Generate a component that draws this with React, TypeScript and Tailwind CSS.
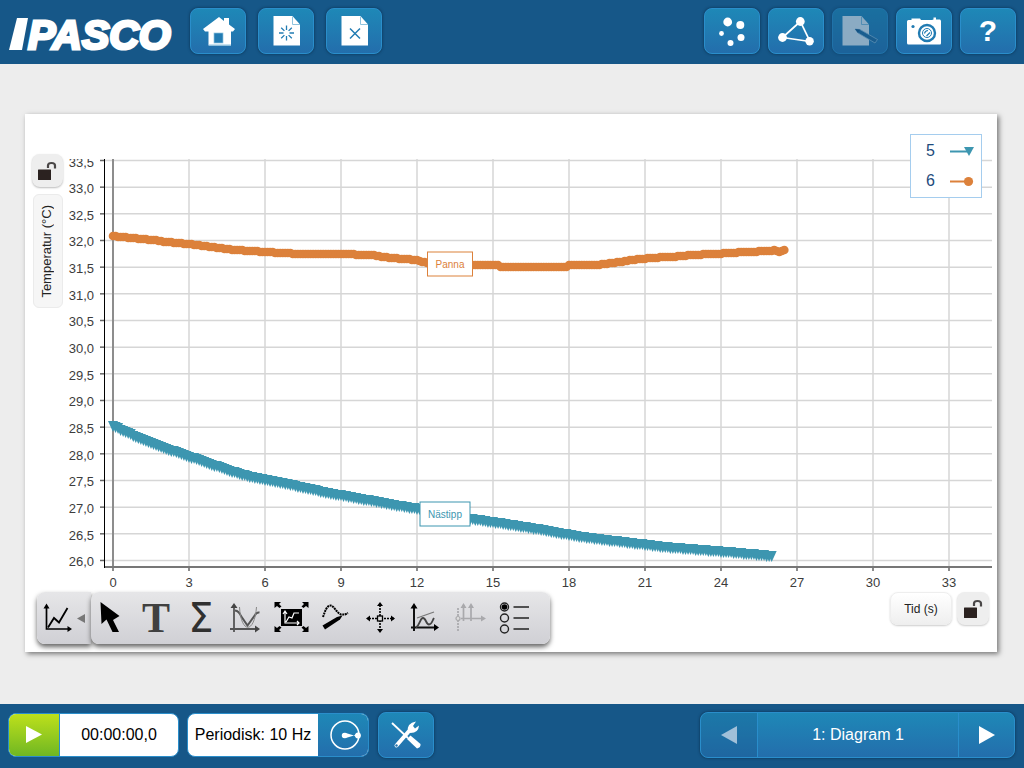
import type { ReactNode } from 'react';

type Point = [number, number];

const X0 = 113;
const PX_PER_SECOND = 76 / 3;

const timeTicks = [0, 3, 6, 9, 12, 15, 18, 21, 24, 27, 30, 33];
const tempTicks = Array.from({ length: 16 }, (_, i) => 33.5 - i * 0.5);

const tx = (seconds: number) => X0 + seconds * PX_PER_SECOND;
const ty = (temp: number) => 160.5 + (33.5 - temp) * 53.33;

const pannaCurve: Point[] = [
  [113, 236], [130, 238], [154, 240], [166, 242], [188, 244], [213, 247], [235, 250], [265, 252],
  [300, 254], [340, 254], [372, 255], [390, 258], [417, 260], [427, 263], [474, 265], [498, 265],
  [501, 267], [566, 267], [569, 265], [594, 265], [605, 264], [620, 262], [632, 260], [650, 258],
  [685, 256], [690, 255], [715, 254], [745, 252], [772, 251], [774, 250], [778, 252], [784, 250],
];

const nosePoints: Point[] = [
  [113, 421], [145, 436], [178, 448], [190, 452], [227, 465], [247, 471], [272, 476], [300, 482],
  [327, 488], [361, 494], [393, 500], [418, 504], [470, 514], [498, 518], [536, 524], [581, 532],
  [613, 536], [664, 542], [738, 548], [772, 551],
];

function sample(curve: Point[], duration: number): Point[] {
  const out: Point[] = [];
  for (let i = 0; i <= duration * 10; i++) {
    const x = tx(i / 10);
    let k = 1;
    while (k < curve.length - 1 && curve[k][0] < x) k++;
    const [xa, ya] = curve[k - 1];
    const [xb, yb] = curve[k];
    out.push([x, Math.round(ya + ((yb - ya) * (x - xa)) / (xb - xa))]);
  }
  return out;
}

const panna = sample(pannaCurve, 26.5);
const nose = sample(nosePoints, 26);

const raised =
  'flex items-center justify-center border border-[#2a8ecb] bg-linear-to-b from-[#1e88b7] to-[#236eac] text-white';

function HeaderButton({ label, disabled, children }: { label: string; disabled?: boolean; children: ReactNode }) {
  return (
    <button
      type="button"
      aria-label={label}
      disabled={disabled}
      className={`${raised} h-[46px] w-14 shrink-0 rounded-lg shadow-[0_0_3px_#0b2f4c] disabled:opacity-50`}
    >
      {children}
    </button>
  );
}

function Icon({ children }: { children: ReactNode }) {
  return (
    <svg viewBox="0 0 36 36" className="h-9 w-9 shrink-0" aria-hidden="true">
      {children}
    </svg>
  );
}

function Page({ x = 5 }: { x?: number }) {
  return (
    <g transform={`translate(${x} 3)`}>
      <path d="M.5 0H19.5L27 8.500V29.500H.5Z" fill="#fff" />
      <path d="M19.500.5V8.500H27" fill="none" stroke="#8ec3de" />
    </g>
  );
}

function Padlock() {
  return (
    <svg viewBox="0 0 20 20" className="h-5 w-5" aria-hidden="true">
      <path d="M11 7V4.500Q11 2 14.500 2T18 4.500V7.500" fill="none" stroke="#4a4747" strokeWidth="2.200" />
      <rect x="1" y="8.500" width="13" height="10.500" rx=".5" fill="#2b2220" />
    </svg>
  );
}

function ToolButton({ label, disabled, children }: { label: string; disabled?: boolean; children: ReactNode }) {
  return (
    <button type="button" aria-label={label} disabled={disabled} className="flex h-12 w-10 items-center justify-center">
      {children}
    </button>
  );
}

function Header() {
  return (
    <header className="flex h-16 items-center justify-between bg-[#165788] pr-2 pl-2 pb-[3px]">
      <div className="flex items-center gap-3">
        <svg viewBox="0 0 170 52" className="h-[52px] w-[170px]" role="img" aria-label="PASCO">
          <path d="M9 13H20L14 45H1Z" fill="#fff" />
          <text
            x="20"
            y="44"
            fontFamily="Liberation Sans, Arial, sans-serif"
            fontSize="41"
            fontWeight="700"
            fontStyle="italic"
            fill="#fff"
            stroke="#fff"
            strokeWidth="3"
          >
            PASCO
          </text>
        </svg>
        <HeaderButton label="Hem">
          <Icon>
            <path d="M19 4L24 8V5H29V11.500L35 16L33 18.500H31V32.500H8.500V18.500H5L3 16Z" fill="#fff" />
            <rect x="14" y="20" width="9" height="10" fill="#227cb3" stroke="#8ec3de" strokeWidth=".7" />
            <path d="M9 32H31" stroke="#8ec3de" />
          </Icon>
        </HeaderButton>
        <HeaderButton label="Ny sida">
          <Icon>
            <Page />
            <path
              d="M18.500 12.500V17M18.500 23V27.500M11 20H15.500M21.500 20H26M13.200 14.700L16.400 17.900M20.600 22.100L23.800 25.300M23.800 14.700L20.600 17.900M16.400 22.100L13.200 25.300"
              stroke="#227cb3"
              strokeWidth="1.3"
            />
          </Icon>
        </HeaderButton>
        <HeaderButton label="Ta bort sida">
          <Icon>
            <Page />
            <path d="M14 15.500L24 25.500M24 15.500L14 25.500" stroke="#227cb3" strokeWidth="1.5" />
          </Icon>
        </HeaderButton>
      </div>
      <div className="flex items-center gap-2">
        <HeaderButton label="Datakällor">
          <Icon>
            <g fill="#fff">
              <circle cx="13.700" cy="9" r="4.400" />
              <circle cx="26.300" cy="12" r="4" />
              <circle cx="7.500" cy="20.500" r="2.400" />
              <circle cx="27" cy="24.500" r="3.500" />
              <circle cx="16.500" cy="30" r="3" />
            </g>
          </Icon>
        </HeaderButton>
        <HeaderButton label="Dela">
          <Icon>
            <path d="M22.300 8.500L4.500 24.500L32 28.500Z" fill="none" stroke="#fff" strokeWidth="1.700" />
            <g fill="#fff">
              <circle cx="22.300" cy="8.500" r="4.400" />
              <circle cx="4.500" cy="24.500" r="4.400" />
              <circle cx="31.600" cy="28.300" r="4.200" />
            </g>
          </Icon>
        </HeaderButton>
        <HeaderButton label="Journal" disabled>
          <Icon>
            <Page x={0} />
            <path d="M13 16L18 16.500L35.500 26.500L33 30L16 20Z" fill="#1c6497" stroke="#9cc3dc" strokeWidth=".8" />
            <path d="M13 16L18 16.500L16 20Z" fill="#124f80" />
          </Icon>
        </HeaderButton>
        <HeaderButton label="Kamera">
          <Icon>
            <path
              d="M2.500 7H5.500V5.500H14L15 7H26L27.500 6.500V4.500H30V6.500H34Q35 7 35 8.500V30Q35 31.500 34 31.500H2.500Q1 31.500 1 30V8.500Q1 7 2.500 7Z"
              fill="#fff"
            />
            <circle cx="21" cy="20" r="8" fill="#fff" stroke="#217bb2" strokeWidth="2.400" />
            <circle cx="21" cy="20" r="4.500" fill="#fff" stroke="#217bb2" strokeWidth="1" />
            <path d="M18.500 20.500Q19 17.700 22 17.500M20.500 23L24 19.500" fill="none" stroke="#217bb2" strokeWidth="1.200" />
            <circle cx="7" cy="13.500" r="1.600" fill="#217bb2" />
          </Icon>
        </HeaderButton>
        <HeaderButton label="Hjälp">
          <span className="text-[30px] leading-none font-bold">?</span>
        </HeaderButton>
      </div>
    </header>
  );
}

function Plot() {
  return (
    <svg viewBox="63 114 934 478" className="block h-auto min-w-0 flex-1" role="img" aria-label="Temperatur mot tid">
      <defs>
        <clipPath id="scale">
          <rect x="63" y="159" width="934" height="433" />
        </clipPath>
      </defs>
      <g stroke="#d6d6d6" strokeWidth="1.500">
        {tempTicks.map((t) => (
          <path key={t} d={`M105 ${ty(t)}H992`} />
        ))}
        {timeTicks.slice(1).map((t) => (
          <path key={t} d={`M${tx(t)} 159V567`} />
        ))}
      </g>
      <path d="M113 159V567" stroke="#8d8d8d" strokeWidth="2" />
      <g stroke="#666" strokeWidth="1.500">
        {tempTicks.map((t) => (
          <path key={t} d={`M100 ${ty(t)}H105`} />
        ))}
        {timeTicks.map((t) => (
          <path key={t} d={`M${tx(t)} 567V571`} />
        ))}
      </g>
      <path d="M104 567H992" stroke="#777" strokeWidth="2" />
      <path d="M104.500 159V568" stroke="#000" />
      <g fontFamily="Liberation Sans, Arial, sans-serif" fontSize="13" fill="#3c3c3c">
        <g textAnchor="end" clipPath="url(#scale)">
          {tempTicks.map((t) => (
            <text key={t} x="94" y={ty(t) + 6}>
              {t.toFixed(1).replace('.', ',')}
            </text>
          ))}
        </g>
        <g textAnchor="middle">
          {timeTicks.map((t) => (
            <text key={t} x={tx(t)} y="587">
              {t}
            </text>
          ))}
        </g>
      </g>
      <g fill="#dc813b">
        {panna.map(([x, y]) => (
          <circle key={x} cx={x} cy={y} r="4.300" />
        ))}
      </g>
      <g fill="#3d96b0">
        {nose.map(([x, y]) => (
          <path key={x} d={`M${x - 5} ${y}H${x + 5}L${x} ${y + 11}Z`} />
        ))}
      </g>
      <g fontFamily="Liberation Sans, Arial, sans-serif" fontSize="10" textAnchor="middle">
        <rect x="427.500" y="252" width="45" height="24" fill="#fff" stroke="#dc813b" />
        <text x="450" y="268" fill="#dc813b">
          Panna
        </text>
        <rect x="420" y="502" width="50" height="24" fill="#fff" stroke="#3d96b0" />
        <text x="445" y="518" fill="#3d96b0">
          Nästipp
        </text>
      </g>
    </svg>
  );
}

function Legend() {
  return (
    <ul className="absolute top-5 right-[15px] w-[72px] border border-[#a5cdee] bg-white py-px text-base text-[#1e4b7c]">
      <li className="flex h-[30px] items-center justify-between pr-[6px] pl-[15px]">
        5
        <svg viewBox="0 0 26 12" className="h-3 w-[26px]" aria-hidden="true">
          <path d="M1 6.500H18" stroke="#3d96b0" strokeWidth="2" />
          <path d="M15 2H25L20 11Z" fill="#3d96b0" />
        </svg>
      </li>
      <li className="flex h-[30px] items-center justify-between pr-[6px] pl-[15px]">
        6
        <svg viewBox="0 0 26 12" className="h-3 w-[26px]" aria-hidden="true">
          <path d="M1 6.500H18" stroke="#dc813b" strokeWidth="2" />
          <circle cx="19.500" cy="6.500" r="4.600" fill="#dc813b" />
        </svg>
      </li>
    </ul>
  );
}

function Toolbar() {
  const surface = 'bg-linear-to-b from-[#e6e6e8] to-[#d0d0d5] shadow-[0_3px_5px_#666]';
  return (
    <div className="flex">
      <button
        type="button"
        aria-label="Diagramverktyg"
        className={`${surface} flex h-[52px] w-[54px] items-center gap-px rounded-l-lg pl-[3px]`}
      >
        <Icon>
          <path d="M6.500 8V29H29" fill="none" stroke="#000" strokeWidth="1.700" />
          <path d="M8 27.500L14 18L19 22.500L27.500 8" fill="none" stroke="#000" strokeWidth="1.800" />
          <path d="M3.500 8.500L6.500 3.500L9.500 8.500ZM27.500 26L32 29L27.500 32Z" />
        </Icon>
        <svg viewBox="0 0 8 9" className="h-[9px] w-2" aria-hidden="true">
          <path d="M0 4.500L8 0V9Z" fill="#777" />
        </svg>
      </button>
      <div className={`${surface} flex h-[52px] items-center gap-[5px] rounded-lg pr-[14px]`}>
        <ToolButton label="Markör">
          <Icon>
            <path d="M7.500 2L8.500 24L13.500 19.500L19.500 32H26L20 20L26.500 16Z" />
          </Icon>
        </ToolButton>
        <ToolButton label="Text">
          <span className="font-['Liberation_Serif',serif] text-[42px] leading-[48px] font-bold text-[#404040]">T</span>
        </ToolButton>
        <ToolButton label="Statistik">
          <span className="font-['DejaVu_Sans',sans-serif] text-[40px] leading-[48px] text-[#303030]">Σ</span>
        </ToolButton>
        <ToolButton label="Kurvanpassning">
          <Icon>
            <g fill="none" stroke="#555">
              <path d="M6 6V32M2 29H29" strokeWidth="1.800" />
              <path d="M7 10.500Q11 11 13 16L19.500 25.500L27 15Q28.500 12 31.500 12.500" strokeWidth="2" />
              <path d="M11.500 7C13 34 26.500 34 28.500 7" stroke="#888" />
            </g>
            <path d="M2.500 8L6 3L9.500 8ZM27 25.500L32 29L27 32.500Z" fill="#444" />
          </Icon>
        </ToolButton>
        <ToolButton label="Anpassa skala">
          <Icon>
            <rect x="8" y="9" width="21" height="17" />
            <path
              d="M12 12V23H26M13 22L16 17L19 18L21 13L26 13M10 14L12 11L14 14M24 21L26 23L24 25"
              fill="none"
              stroke="#fff"
              strokeWidth="1.200"
            />
            <path d="M1.500 2H8L6 4L8.500 6.500L6.500 8L4 6L1.500 8ZM35.500 2H29L31 4L28.500 6.500L30.500 8L33 6L35.500 8ZM1.500 32H8L6 30L8.500 27.500L6.500 26L4 28L1.500 26ZM35.500 32H29L31 30L28.500 27.500L30.500 26L33 28L35.500 26Z" />
          </Icon>
        </ToolButton>
        <ToolButton label="Markera data">
          <Icon>
            <path
              d="M5 17C7 11 9 5.500 12.500 5.500C16 5.500 19 13.500 23 14.500H27L30 13"
              fill="none"
              stroke="#000"
              strokeWidth="2"
              strokeDasharray="2 .700"
            />
            <path d="M4.500 25.500L19 17L24.500 15.500L22 19.500L7 29.500Z" />
          </Icon>
        </ToolButton>
        <ToolButton label="Koordinater">
          <Icon>
            <path d="M17 5V30M6 18.500H31" stroke="#000" strokeWidth="1.600" strokeDasharray="2 1" />
            <rect x="14.500" y="16" width="5" height="5" fill="#ddd" stroke="#000" strokeWidth="1.300" />
            <path d="M14 6L17 2L20 6ZM14 29L17 33L20 29ZM7 15.500L3 18.500L7 21.500ZM28 15.500L32 18.500L28 21.500Z" />
          </Icon>
        </ToolButton>
        <ToolButton label="Lutning">
          <Icon>
            <path d="M6 7V31M3 27.500H28" stroke="#111" strokeWidth="2" />
            <path d="M2.500 8.500L6 3L9.500 8.500ZM26 24L31 27.500L26 31Z" />
            <path d="M9 18L26 12" stroke="#777" strokeWidth="1.300" />
            <path
              d="M8 27.500C12 25 12 18 15 18C18 18 18 24.500 21 24.500C24 24.500 24 21 26 18"
              fill="none"
              stroke="#444"
              strokeWidth="1.800"
            />
          </Icon>
        </ToolButton>
        <ToolButton label="Flera axlar" disabled>
          <Icon>
            <g stroke="#a9a9ac" fill="none" strokeWidth="1.700">
              <path d="M5 8V32" strokeDasharray="2 1" />
              <circle cx="5" cy="18.500" r="2" fill="#ddd" strokeWidth="1.200" />
              <path d="M10.500 5V21M18 5V21M8 18.500H30" />
            </g>
            <path d="M7.500 8L10.500 3L13.500 8ZM15 8L18 3L21 8ZM28 15.500L33 18.500L28 21.500Z" fill="#a9a9ac" />
          </Icon>
        </ToolButton>
        <ToolButton label="Teckenförklaring">
          <Icon>
            <g fill="none" stroke="#222" strokeWidth="1.400">
              <circle cx="6.500" cy="7" r="4" />
              <circle cx="6.500" cy="18" r="4" />
              <circle cx="6.500" cy="29" r="4" />
              <path d="M15.500 7H31M15.500 18H31M15.500 29H31" />
            </g>
            <circle cx="6.500" cy="7" r="2.800" />
          </Icon>
        </ToolButton>
      </div>
    </div>
  );
}

function ChartCard() {
  return (
    <section className="relative bg-white pb-2 shadow-[2px_2px_5px_#777]">
      <div className="flex">
        <div className="flex w-[38px] shrink-0 flex-col items-end gap-[7px] pt-10">
          <button
            type="button"
            aria-label="Lås temperaturaxel"
            className="flex h-[33px] w-[31px] items-center justify-center rounded-lg bg-[#eeeeee] pr-px shadow-[0_1px_2px_#bbb]"
          >
            <Padlock />
          </button>
          <button
            type="button"
            className="flex h-[114px] w-[30px] items-center justify-center rounded-md border border-[#ebebeb] bg-[#f6f6f6] pr-1 text-[13px] leading-none whitespace-nowrap text-[#222]"
          >
            <span className="rotate-180 [writing-mode:vertical-rl]">Temperatur (°C)</span>
          </button>
        </div>
        <Plot />
      </div>
      <Legend />
      <div className="flex items-start justify-between pr-2 pl-3">
        <Toolbar />
        <div className="flex gap-[5px]">
          <button
            type="button"
            className="h-[33px] w-[62px] rounded-lg border border-[#eeeeee] bg-linear-to-b from-white to-[#efefef] text-xs text-[#222] shadow-[0_1px_2px_#ccc]"
          >
            Tid (s)
          </button>
          <button
            type="button"
            aria-label="Lås tidsaxel"
            className="flex h-[33px] w-8 items-center justify-center rounded-lg bg-[#eeeeee] pr-px shadow-[0_1px_2px_#ccc]"
          >
            <Padlock />
          </button>
        </div>
      </div>
    </section>
  );
}

function Footer() {
  return (
    <footer className="flex h-16 items-center justify-between bg-[#165788] px-2 pb-[3px]">
      <div className="flex items-center gap-2">
        <div className="flex h-11 overflow-hidden rounded-lg border border-[#2a8ecb] bg-white">
          <button
            type="button"
            aria-label="Starta mätning"
            className="flex w-[51px] items-center justify-center border-r border-[#2a8ecb] bg-linear-to-b from-[#bde01a] to-[#6fb722]"
          >
            <svg viewBox="0 0 16 17" className="h-[17px] w-4" aria-hidden="true">
              <path d="M0 0L16 8.500L0 17Z" fill="#fff" />
            </svg>
          </button>
          <output className="flex w-[118px] items-center justify-center text-base text-black">00:00:00,0</output>
        </div>
        <div className="flex h-11 overflow-hidden rounded-lg border border-[#2a8ecb] bg-white">
          <span className="flex w-[130px] items-center justify-center text-base whitespace-nowrap text-black">
            Periodisk: 10 Hz
          </span>
          <button
            type="button"
            aria-label="Samplingsinställningar"
            className="flex w-[50px] items-center justify-center bg-linear-to-b from-[#1e88b7] to-[#236eac]"
          >
            <Icon>
              <circle cx="20" cy="18" r="14" fill="none" stroke="#fff" strokeWidth="1.500" />
              <circle cx="19.500" cy="18.500" r="2.700" fill="#fff" />
              <path d="M20 15.800L29 18.500L20 21.200ZM29 18.500L33 15.500V21.500Z" fill="#fff" />
              <circle cx="33" cy="18.500" r="2.900" fill="#fff" />
            </Icon>
          </button>
        </div>
        <button
          type="button"
          aria-label="Verktyg"
          className={`${raised} ml-px h-[46px] w-14 rounded-lg shadow-[0_0_3px_#0b2f4c]`}
        >
          <Icon>
            <path d="M4 6L20 21" stroke="#fff" strokeWidth="1.800" />
            <path d="M19 22L22.500 18.500L32.500 27Q33 30.500 29 31.500Z" fill="#fff" />
            <path d="M8.500 28.500L21.500 13.500" stroke="#fff" strokeWidth="4" strokeLinecap="round" />
            <path d="M20 14Q18.500 6.500 28 4.500L25 9L27 11.500L31 8.500Q30.500 16 22.500 16Z" fill="#fff" />
            <circle cx="8.500" cy="28.500" r="1.200" fill="#2274ae" />
          </Icon>
        </button>
      </div>
      <nav className="mr-px flex h-[46px] overflow-hidden rounded-lg border border-[#2a8ecb] bg-linear-to-b from-[#1e88b7] to-[#236eac] text-white shadow-[0_0_3px_#0b2f4c]">
        <button
          type="button"
          aria-label="Föregående sida"
          disabled
          className="flex w-[56px] items-center justify-center bg-[#165788]/30"
        >
          <svg viewBox="0 0 16 18" className="h-[18px] w-4" aria-hidden="true">
            <path d="M0 9L16 0V18Z" fill="#a1c0d9" />
          </svg>
        </button>
        <button type="button" className="w-[202px] border-x border-[#2a8ecb] text-base">
          1: Diagram 1
        </button>
        <button type="button" aria-label="Nästa sida" className="flex w-[55px] items-center justify-center">
          <svg viewBox="0 0 16 18" className="h-[18px] w-4" aria-hidden="true">
            <path d="M0 0L16 9L0 18Z" fill="#fff" />
          </svg>
        </button>
      </nav>
    </footer>
  );
}

export default function App() {
  return (
    <div className="flex min-h-screen flex-col bg-[#ededed] font-['Liberation_Sans',Arial,sans-serif]">
      <Header />
      <main className="flex-1 pt-[50px] pr-[27px] pb-12 pl-[25px]">
        <ChartCard />
      </main>
      <Footer />
    </div>
  );
}
